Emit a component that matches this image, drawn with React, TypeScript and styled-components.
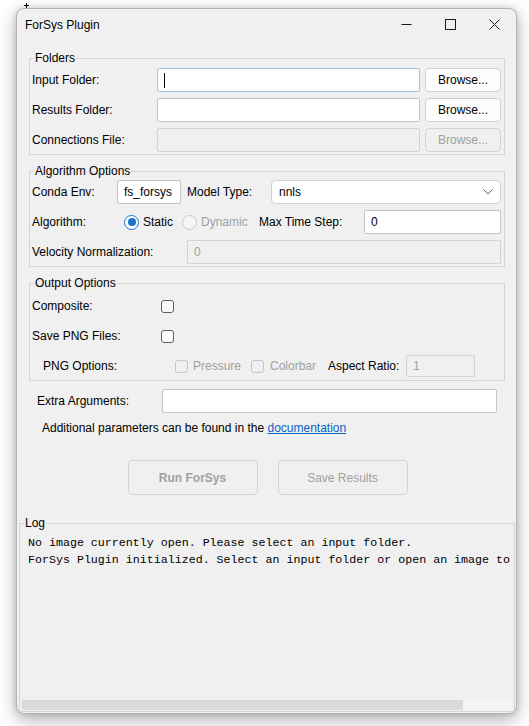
import React from "react";
import styled, { createGlobalStyle, css } from "styled-components";

const GlobalStyle = createGlobalStyle`
  html, body { margin: 0; padding: 0; background: #ffffff; }
  body {
    font-family: "Liberation Sans", Arial, sans-serif;
    font-size: 12px;
    color: #000000;
  }
`;

const Desktop = styled.div`
  position: relative;
  width: 529px;
  height: 726px;
  padding: 8px 0 0 16px;
  box-sizing: border-box;
  overflow: hidden;
  background: #ffffff;
`;

const CursorMark = styled.svg`
  position: absolute;
  left: 24px;
  top: 3px;
`;

const Window = styled.div`
  width: 501px;
  height: 706px;
  box-sizing: border-box;
  background: #f0f0f0;
  border: 1px solid #b4b4b4;
  border-radius: 8px;
  box-shadow: 0 6px 18px rgba(0, 0, 0, 0.3), 0 0 6px rgba(0, 0, 0, 0.14);
  display: flex;
  flex-direction: column;
  overflow: hidden;
`;

const TitleBar = styled.div`
  height: 31px;
  display: flex;
  align-items: center;
  padding-left: 8px;
  flex-shrink: 0;
`;

const Title = styled.div`
  flex: 1;
  font-size: 12px;
  line-height: 16px;
  padding-top: 1px;
`;

const CaptionButton = styled.div`
  width: 44px;
  height: 31px;
  display: flex;
  align-items: center;
  justify-content: center;
`;

const Body = styled.div`
  flex: 1;
  display: flex;
  flex-direction: column;
  padding: 10px 11px 1px 12px;
  min-height: 0;
`;

const Group = styled.fieldset<{ $top?: number }>`
  margin: ${(p) => p.$top ?? 0}px 0 0 0;
  padding: 0 3px 2px 2px;
  border: 1px solid #d6d6d6;
  min-width: 0;
`;

const Legend = styled.legend`
  padding: 0 1px;
  margin-left: 2px;
  line-height: 16px;
  font-size: 12px;
`;

const FolderGrid = styled.div`
  margin-top: 2px;
  display: grid;
  grid-template-columns: 125px 1fr 81px;
  grid-auto-rows: 24px;
  row-gap: 6px;
  align-items: center;
`;

const Rows = styled.div<{ $top: number }>`
  margin-top: ${(p) => p.$top}px;
  display: flex;
  flex-direction: column;
  gap: 6px;
`;

const Row = styled.div<{ $indent?: number }>`
  height: 24px;
  display: flex;
  align-items: center;
  padding-left: ${(p) => p.$indent ?? 0}px;
`;

const Label = styled.span<{ $w?: number; $disabled?: boolean; $gap?: number }>`
  flex-shrink: 0;
  white-space: nowrap;
  ${(p) => p.$w !== undefined && css`width: ${p.$w}px;`}
  margin-left: ${(p) => p.$gap ?? 0}px;
  color: ${(p) => (p.$disabled ? "#a0a0a0" : "#000")};
`;

const TextBox = styled.div<{ $w?: number; $disabled?: boolean; $focus?: boolean; $h?: number }>`
  box-sizing: border-box;
  height: ${(p) => p.$h ?? 24}px;
  ${(p) => (p.$w !== undefined ? css`width: ${p.$w}px; flex-shrink: 0;` : css`flex: 1; min-width: 0;`)}
  background: ${(p) => (p.$disabled ? "#f0f0f0" : "#ffffff")};
  border: 1px solid ${(p) => (p.$focus ? "#9cc1e6" : p.$disabled ? "#d2d2d2" : "#c4c4c4")};
  border-radius: 2px;
  display: flex;
  align-items: center;
  padding-left: 6px;
  color: ${(p) => (p.$disabled ? "#a0a0a0" : "#000")};
  white-space: nowrap;
`;

const Caret = styled.span`
  width: 1px;
  height: 15px;
  background: #000;
`;

const Combo = styled.div`
  box-sizing: border-box;
  flex: 1;
  height: 24px;
  background: #ffffff;
  border: 1px solid #cfcfcf;
  border-radius: 4px;
  display: flex;
  align-items: center;
  padding: 0 7px 0 7px;
`;

const ComboText = styled.span`
  flex: 1;
`;

const Button = styled.div<{ $disabled?: boolean; $w: number; $h: number; $bold?: boolean }>`
  box-sizing: border-box;
  width: ${(p) => p.$w}px;
  height: ${(p) => p.$h}px;
  justify-self: end;
  display: flex;
  align-items: center;
  justify-content: center;
  border-radius: 4px;
  border: 1px solid ${(p) => (p.$disabled ? "#d3d3d3" : "#d0d0d0")};
  background: ${(p) => (p.$disabled ? "#f0f0f0" : "#fdfdfd")};
  color: ${(p) => (p.$disabled ? "#a0a0a0" : "#000")};
  font-weight: ${(p) => (p.$bold ? 700 : 400)};
`;

const Radio = styled.span<{ $checked?: boolean; $disabled?: boolean }>`
  box-sizing: border-box;
  width: 15px;
  height: 15px;
  border-radius: 50%;
  flex-shrink: 0;
  display: inline-flex;
  align-items: center;
  justify-content: center;
  ${(p) =>
    p.$checked
      ? css`
          background: #ffffff;
          border: 1.5px solid #1a73c9;
          &::after {
            content: "";
            width: 8px;
            height: 8px;
            border-radius: 50%;
            background: #1a73c9;
          }
        `
      : css`
          background: #f5f5f5;
          border: 1px solid ${p.$disabled ? "#c8c8c8" : "#707070"};
        `}
`;

const Check = styled.span<{ $disabled?: boolean }>`
  box-sizing: border-box;
  width: 13px;
  height: 13px;
  flex-shrink: 0;
  border-radius: 3px;
  background: ${(p) => (p.$disabled ? "#f0f0f0" : "#fbfbfb")};
  border: 1px solid ${(p) => (p.$disabled ? "#c6c6c6" : "#5e5e5e")};
`;

const OptionText = styled.span<{ $disabled?: boolean; $gap: number; $w?: number }>`
  margin-left: ${(p) => p.$gap}px;
  ${(p) => p.$w !== undefined && css`width: ${p.$w}px;`}
  flex-shrink: 0;
  white-space: nowrap;
  color: ${(p) => (p.$disabled ? "#a0a0a0" : "#000")};
`;

const ExtraRow = styled.div`
  margin: 8px 8px 0 8px;
  height: 24px;
  display: flex;
  align-items: center;
`;

const HelpText = styled.div`
  margin-top: 7px;
  padding-left: 13px;
  line-height: 16px;
`;

const Link = styled.a`
  color: #0b63ce;
  text-decoration: underline;
`;

const ButtonBar = styled.div`
  margin-top: 24px;
  display: flex;
  justify-content: center;
  gap: 20px;
  padding-left: 1px;
`;

const LogGroup = styled.fieldset`
  margin: 20px -10px 0 -10px;
  padding: 0 2px 1px 2px;
  border: 1px solid #d6d6d6;
  min-width: 0;
  flex: 1;
  display: flex;
  flex-direction: column;
  min-height: 0;
`;

const LogText = styled.div`
  flex: 1;
  overflow: hidden;
  padding: 3px 0 0 6px;
  font-family: "Liberation Mono", "Courier New", monospace;
  font-size: 11.65px;
  line-height: 17px;
  white-space: pre;
  color: #000;
`;

const HScroll = styled.div`
  height: 10px;
  display: flex;
  background: #f5f5f5;
  flex-shrink: 0;
`;

const HThumb = styled.div`
  background: #dadada;
`;

export default function App() {
  return (
    <>
      <GlobalStyle />
      <Desktop>
        <CursorMark width="5" height="5" viewBox="0 0 5 5">
          <path d="M2.5 0v5M0 2.5h5" stroke="#000" strokeWidth="1" />
        </CursorMark>
        <Window>
          <TitleBar>
            <Title>ForSys Plugin</Title>
            <CaptionButton>
              <svg width="11" height="11" viewBox="0 0 11 11">
                <path d="M0.5 5.5h10" stroke="#1a1a1a" strokeWidth="1" />
              </svg>
            </CaptionButton>
            <CaptionButton>
              <svg width="11" height="11" viewBox="0 0 11 11">
                <rect x="0.5" y="0.5" width="10" height="10" fill="none" stroke="#1a1a1a" strokeWidth="1" />
              </svg>
            </CaptionButton>
            <CaptionButton>
              <svg width="11" height="11" viewBox="0 0 11 11">
                <path d="M0.5 0.5l10 10M10.5 0.5l-10 10" stroke="#1a1a1a" strokeWidth="1" />
              </svg>
            </CaptionButton>
          </TitleBar>

          <Body>
            <Group>
              <Legend>Folders</Legend>
              <FolderGrid>
                <Label>Input Folder:</Label>
                <TextBox $focus>
                  <Caret />
                </TextBox>
                <Button $w={76} $h={24}>Browse...</Button>

                <Label>Results Folder:</Label>
                <TextBox />
                <Button $w={76} $h={24}>Browse...</Button>

                <Label>Connections File:</Label>
                <TextBox $disabled />
                <Button $w={76} $h={24} $disabled>Browse...</Button>
              </FolderGrid>
            </Group>

            <Group $top={8}>
              <Legend>Algorithm Options</Legend>
              <Rows $top={1}>
                <Row>
                  <Label $w={85}>Conda Env:</Label>
                  <TextBox $w={64}>fs_forsys</TextBox>
                  <Label $w={84} $gap={6}>Model Type:</Label>
                  <Combo>
                    <ComboText>nnls</ComboText>
                    <svg width="10" height="6" viewBox="0 0 10 6">
                      <path d="M0.5 0.5l4.5 4.5 4.5-4.5" fill="none" stroke="#606060" strokeWidth="1" />
                    </svg>
                  </Combo>
                </Row>
                <Row>
                  <Label $w={92}>Algorithm:</Label>
                  <Radio $checked />
                  <OptionText $gap={4} $w={39}>Static</OptionText>
                  <Radio $disabled />
                  <OptionText $gap={4} $w={58} $disabled>Dynamic</OptionText>
                  <Label $w={105}>Max Time Step:</Label>
                  <TextBox>0</TextBox>
                </Row>
                <Row>
                  <Label $w={155}>Velocity Normalization:</Label>
                  <TextBox $disabled>0</TextBox>
                </Row>
              </Rows>
            </Group>

            <Group $top={8}>
              <Legend>Output Options</Legend>
              <Rows $top={3}>
                <Row>
                  <Label $w={129}>Composite:</Label>
                  <Check />
                </Row>
                <Row>
                  <Label $w={129}>Save PNG Files:</Label>
                  <Check />
                </Row>
                <Row $indent={11}>
                  <Label $w={132}>PNG Options:</Label>
                  <Check $disabled />
                  <OptionText $gap={5} $w={58} $disabled>Pressure</OptionText>
                  <Check $disabled />
                  <OptionText $gap={6} $w={58} $disabled>Colorbar</OptionText>
                  <Label $w={78}>Aspect Ratio:</Label>
                  <TextBox $w={69} $h={22} $disabled>1</TextBox>
                </Row>
              </Rows>
            </Group>

            <ExtraRow>
              <Label $w={125}>Extra Arguments:</Label>
              <TextBox />
            </ExtraRow>
            <HelpText>
              Additional parameters can be found in the <Link href="#">documentation</Link>
            </HelpText>

            <ButtonBar>
              <Button $w={130} $h={35} $disabled $bold>Run ForSys</Button>
              <Button $w={130} $h={35} $disabled>Save Results</Button>
            </ButtonBar>

            <LogGroup>
              <Legend>Log</Legend>
              <LogText>
                {"No image currently open. Please select an input folder.\nForSys Plugin initialized. Select an input folder or open an image to"}
              </LogText>
              <HScroll>
                <HThumb style={{ width: 441 }} />
              </HScroll>
            </LogGroup>
          </Body>
        </Window>
      </Desktop>
    </>
  );
}
